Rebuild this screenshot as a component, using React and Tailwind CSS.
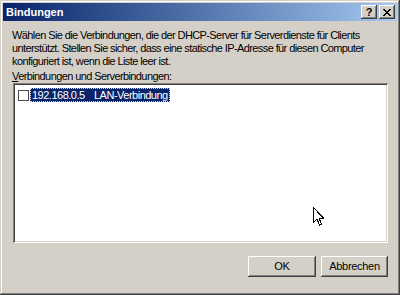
import React from "react";

const raised =
  "shadow-[inset_-1px_-1px_#404040,inset_1px_1px_#ffffff,inset_-2px_-2px_#808080,inset_2px_2px_#d4d0c8]";

const TitleButton = ({ children }) => (
  <div
    className={`w-[16px] h-[14px] bg-[#d4d0c8] ${raised} flex items-center justify-center text-black text-[11px] font-bold leading-none`}
  >
    {children}
  </div>
);

const Cursor = () => (
  <svg
    className="absolute left-[313px] top-[207px]"
    width="12"
    height="20"
    viewBox="0 0 12 20"
  >
    <path
      d="M0.5 0.5 L0.5 15.5 L4 12 L6.5 18 L8.5 17 L6 11.2 L10.5 11.2 Z"
      fill="#ffffff"
      stroke="#000000"
      strokeWidth="1"
      shapeRendering="crispEdges"
    />
  </svg>
);

const App = () => {
  return (
    <div className="relative w-[400px] h-[295px] bg-[#d4d0c8] p-[3px] flex flex-col shadow-[inset_-1px_-1px_#404040,inset_1px_1px_#d4d0c8,inset_-2px_-2px_#808080,inset_2px_2px_#ffffff] font-['Tahoma','Liberation_Sans',sans-serif] text-[11px] text-black">
      {/* Title bar */}
      <div className="h-[18px] flex items-center justify-between pl-[3px] pr-[2px] bg-gradient-to-r from-[#0a246a] to-[#a6caf0]">
        <span className="text-white font-bold text-[11px] leading-none">Bindungen</span>
        <div className="flex gap-[2px]">
          <TitleButton>?</TitleButton>
          <TitleButton>
            <svg width="8" height="7" viewBox="0 0 8 7" shapeRendering="crispEdges">
              <path d="M0 0h2v1H0zM6 0h2v1H6zM1 1h2v1H1zM5 1h2v1H5zM2 2h4v1H2zM3 3h2v1H3zM2 4h4v1H2zM1 5h2v1H1zM5 5h2v1H5zM0 6h2v1H0zM6 6h2v1H6z" fill="#000" />
            </svg>
          </TitleButton>
        </div>
      </div>

      {/* Body */}
      <div className="flex-1 flex flex-col pl-[9px] pr-[9px] pt-[8px]">
        <p className="leading-[13px] whitespace-nowrap tracking-[-0.6px]">
          Wählen Sie die Verbindungen, die der DHCP-Server für Serverdienste für Clients
          <br />
          unterstützt. Stellen Sie sicher, dass eine statische IP-Adresse für diesen Computer
          <br />
          konfiguriert ist, wenn die Liste leer ist.
        </p>
        <p className="leading-[13px] mt-[2px] whitespace-nowrap tracking-[-0.6px]">
          <span className="underline">V</span>erbindungen und Serverbindungen:
        </p>

        {/* List box */}
        <div className="ml-[1px] h-[160px] bg-white p-[2px] shadow-[inset_1px_1px_#808080,inset_-1px_-1px_#ffffff,inset_2px_2px_#404040,inset_-2px_-2px_#d4d0c8]">
          <div className="flex items-center pl-[3px] pt-[3px]">
            <div className="w-[11px] h-[11px] border border-[#4a4a4a] bg-white" />
            <div className="ml-[1px] h-[14px] flex items-center bg-[#0a246a] text-white pl-[2px] pr-[2px] leading-none tracking-[-0.5px] whitespace-nowrap outline-1 outline-dotted outline-[#d4d0c8] -outline-offset-1">
              <span className="w-[62px]">192.168.0.5</span>
              <span>LAN-Verbindung</span>
            </div>
          </div>
        </div>

        {/* Buttons */}
        <div className="flex justify-end gap-[5px] mt-[13px]">
          <button className={`w-[68px] h-[21px] bg-[#d4d0c8] ${raised} text-[11px] leading-none tracking-[-0.3px]`}>
            OK
          </button>
          <button className={`w-[67px] h-[21px] bg-[#d4d0c8] ${raised} text-[11px] leading-none tracking-[-0.3px]`}>
            Abbrechen
          </button>
        </div>
      </div>

      <Cursor />
    </div>
  );
};

export default App;
